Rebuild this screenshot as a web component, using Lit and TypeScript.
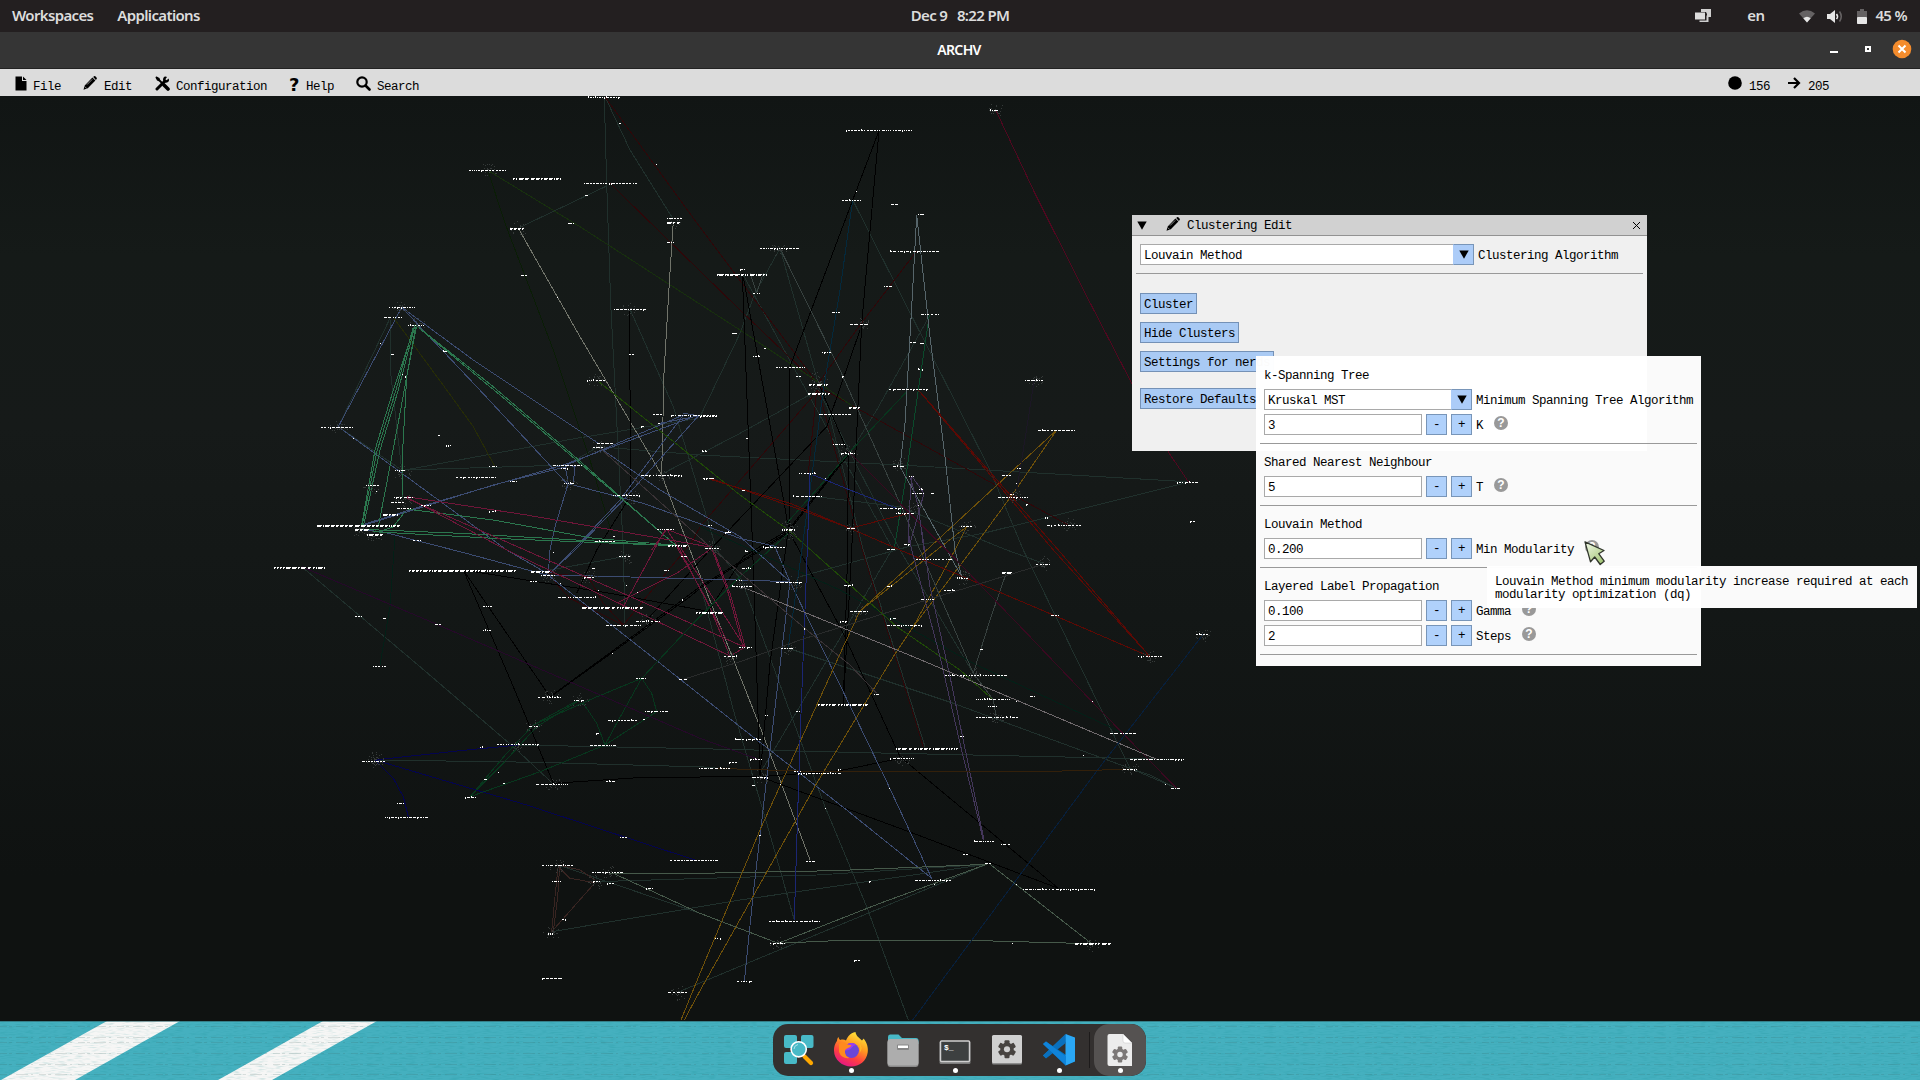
import { LitElement, html, svg, css } from "lit";
import { customElement, property } from "lit/decorators.js";

/* ---------- graph data ----------
   Points are "<sector><x>,<y>"; a sector is an origin on the screen and
   coordinates inside it are thirds of a pixel. */
const ORIGIN: Record<string, [number, number]> = {
  A: [260, 90],
  B: [700, 90],
  C: [260, 530],
  D: [700, 530],
};
const TOP = 96;

function pt(s: string): [number, number] {
  const o = ORIGIN[s[0]];
  const [x, y] = s.slice(1).split(",").map(Number);
  return [o[0] + x / 3, o[1] + y / 3 - TOP];
}

const TEAL = "#20302c";
const BLUE = "#3c4c72";
const GREEN = "#2b774e";
const CRIM = "#6f1639";
const BLACK = "#000000";
const DRED = "#2e0709";
const DGREEN = "#07371d";
const NAVY = "#04044e";
const GOLD = "#6e5009";
const RED = "#5c0904";
const SAGE = "#46594a";
const BEIGE = "#71746a";
const STEEL = "#56656a";
const PURP = "#43365a";

const EDGES: [string, string[]][] = [
  [TEAL, [
    "A1033,22 A1040,280 A1052,640 A1068,950 A1090,1380 C1095,290",
    "A1036,22 A1110,180 A1238,385", "A1040,288 A780,412",
    "A1110,658 A1240,950 A1370,1380 D125,150 D275,560 D375,830 D500,1130 D625,1470",
    "A390,685 A235,1010", "A390,685 A392,850 A425,1140", "A235,1010 A425,1140",
    "A435,1140 A950,1045 A1315,985", "A435,1140 A920,1125", "A1320,980 A1440,730 B165,610 B240,475",
    "A1210,1150 A1440,1030 B355,900", "A1015,1070 B0,1095 B600,1125 B1460,1175",
    "C125,110 C480,410 C760,650 C880,762", "C345,690 C830,697 C1365,712", "C775,645 D0,656 D500,668 D1410,688",
    "C875,1205 D120,1110 D860,1003", "C895,1005 D0,1150 D235,1240", "C1005,1055 D350,1035 D860,1003",
    "C1250,1388 D250,1255 D860,1003", "B458,330 B870,1140 B970,1380 D1290,715",
    "B240,475 B355,880", "B127,550 B400,1050 B580,1380", "B355,900 B600,1380 D820,430",
    "B690,675 B530,960 B455,1080", "B1460,1178 B850,1330 B625,1370 D300,140",
    "B330,1218 B600,1250 B920,1380 D1030,100", "D265,355 D760,520 D1290,715 D1430,775",
    "D1290,715 D1350,735 D1430,775", "C870,120 C1090,80", "D575,60 D290,545 D180,730",
    "B370,900 B490,1380 D675,650", "C1320,160 C1420,540 D200,880 D283,1170", "A1015,1070 A920,1125",
  ]],
  [DRED, [
    "A1036,22 B0,412 B345,870", "A1050,280 A1440,660 B340,870", "B650,483 B480,705 B355,880",
    "B355,900 B0,1310 C1300,30 C1090,285", "B355,890 B940,1215 B1105,1305", "B350,900 B325,1150",
    "B355,900 B487,1380 D670,650", "C1090,285 C1030,220 C985,140", "C870,140 C930,205 C1090,285", "C860,130 C985,140",
  ]],
  ["#0a1d06", ["A685,245 A735,400 A880,780 A990,1110 A1055,1330"]],
  ["#17300d", ["A690,245 A960,410 A1440,720 B345,870 B460,950"]],
  [BEIGE, ["A775,415 A960,740 A1205,1155", "A1240,395 A1228,580 A1212,850 A1205,1155", "A1205,1155 A1290,1380 D180,590 D330,990"]],
  [BLACK, [
    "A1108,658 A1110,900 A1113,1215", "C610,120 C1050,190 C1350,245", "C610,120 C870,500", "C610,120 C760,470 C880,760",
    "C870,500 C1280,200 D0,170 D265,5", "C872,500 C1290,200 D0,175 D267,8", "C880,760 C1150,742 D180,740",
    "B537,122 B458,330 B270,830 B268,1310", "B537,122 B485,700 B467,1100 B455,1380 D430,525",
    "B127,550 B158,1380 D180,735", "B130,560 B265,1310", "B445,1090 B443,1380 D430,525",
    "B480,720 B380,1010 B30,1380 C1160,270", "B265,1320 D210,400 D180,740", "B265,1320 D430,310 D600,680 D1075,1075",
    "D600,685 D420,722 D180,740", "D180,740 D640,910 D1075,1075", "B360,890 B445,1090",
    "B445,1090 B265,1320", "B447,1092 B268,1322", "A1113,1215 A1010,1380 C950,190", "B265,1320 D130,80 C1345,245",
  ]],
  [BLUE, [
    "A425,652 A235,1010", "A425,652 A640,810 A1015,1060", "A425,652 A650,890 A920,1180", "A235,1010 A740,1380 C870,135",
    "A305,1305 A480,1250 A910,1125 A1315,975", "A305,1308 A700,1185 A920,1130", "A920,1125 A945,1130 A940,1180",
    "A915,1125 A925,1180", "A920,1180 A1150,1240 A1440,1345 B230,1370", "A925,1180 A885,1310 A870,1380 C865,130",
    "A1315,978 A1090,1230 A945,1380 C870,130", "A1270,975 A1080,1230 A940,1380", "A1200,1000 A1315,978",
    "A1015,1070 A1200,1200 A1440,1340 D270,155", "C860,135 C1000,138 C1440,150 D270,155",
    "C870,140 C1150,360 C1440,590 D440,840 D695,1045", "C310,0 C365,5 C600,65 C860,135", "D270,155 D560,755 D695,1045",
    "D225,50 D270,155", "D270,155 D210,660 D160,1090 D133,1355", "C880,120 C1000,0", "A1270,975 A920,1125", "A1270,970 A1320,978",
  ]],
  ["#262c06", ["A400,682 A560,900 A640,1010 A705,1130"]],
  [GREEN, [
    "A465,706 A400,900 A345,1080 A305,1305", "A465,706 A415,900 A360,1080 A310,1310", "A460,712 A408,900 A352,1080 A307,1305",
    "A467,710 A420,970 A380,1180 A355,1310", "A470,706 A440,860 A428,1080 A428,1220",
    "A468,706 A700,890 A950,1105 A1245,1365", "A474,712 A720,915 A960,1120 A1250,1368",
    "A305,1318 A600,1330 A1245,1367", "A340,1325 A700,1345 A1245,1367", "A445,1258 A700,1290 A1000,1345 A1240,1365", "A435,1265 A400,1310 A360,1325",
  ]],
  [CRIM, [
    "A440,1220 A800,1275 A1200,1345 A1355,1372", "A440,1222 A740,1380 C1410,378", "A440,1225 A795,1380 D135,352",
    "C1090,230 C1215,0", "C1070,220 C1250,130 C1355,55", "C1250,50 C1340,210 C1410,378", "C1260,50 D135,352",
    "C1355,55 C1405,190 D130,352", "C1358,55 C1410,190 D136,352", "A1220,1318 A1260,1380 C1400,330", "A1220,1318 A1355,1370", "D90,378 D135,352", "A1220,1318 A1175,1380",
  ]],
  [DGREEN, [
    "C1145,445 C1000,505 C820,585", "C1145,445 C1070,580 C1035,645", "C1145,445 C1175,490 C1190,545 C1035,645",
    "C955,510 C820,585", "C955,513 C830,590 C720,710 C630,800", "C970,520 C1010,580 C1035,645", "C820,585 C740,670 C630,800",
    "C1035,645 C840,725 C630,800", "C1145,445 C1300,280 C1440,140 D265,10", "B620,905 B455,1080 B260,1300",
  ]],
  ["#0a4a2b", ["B688,675 B655,900 B615,1180 B582,1380 D585,50"]],
  ["#032017", ["C405,20 C390,230 C360,405", "B0,1310 D420,180 D820,400 D1270,610"]],
  ["#26082a", ["C125,110 C500,270 C870,430 D0,625 D180,690"]],
  [NAVY, ["C345,690 C600,662 C775,645", "C345,690 C800,825 C1305,990", "C345,690 C400,745 C430,800 C445,860"]],
  ["#382421", ["C895,1005 C885,1100 C875,1205", "C899,1005 C893,1100 C880,1205", "C895,1010 C930,1045 C1005,1058", "C895,1005 C960,1020 C1005,1050", "C1005,1058 C875,1205"]],
  [SAGE, ["C1060,1030 D0,1150 D235,1240", "C1050,1030 D0,1030 D400,1022 D860,1003", "D235,1240 D540,1120 D860,1003", "D235,1240 D430,1231 D800,1231 D1175,1241", "D870,1003 D1020,1120 D1175,1241"]],
  [GOLD, ["B1070,1020 B680,1380 D480,243", "B1070,1020 B940,1210 B815,1380 D640,290", "B800,1310 B765,1380 D640,290", "B800,1310 B710,1380 D480,243", "D480,243 D430,350 D180,900 D0,1330 C1263,1470", "D640,290 D580,380 D350,760 D0,1382 C1273,1470"]],
  ["#1f4a06", ["A1010,870 A1440,1215 B265,1320 D590,290 D780,420 D880,510"]],
  ["#04293c", ["B458,330 B420,600 B370,900 B330,1200 D300,100 D265,350"]],
  ["#37413f", ["B240,475 B420,840 B600,1240 B660,1380 D760,290 D820,430", "B150,550 B170,610", "B190,550 B170,610", "D920,125 D870,270 D820,430", "D820,430 D880,510 D890,570"]],
  [STEEL, ["B650,375 B635,650 B615,1000 B600,1130 B740,1380 D785,140", "B650,375 B690,740 B735,1100 B765,1380 D785,140"]],
  [RED, ["B655,900 B850,1130 B1060,1380 D1350,380", "B660,905 B860,1135 B1075,1380 D1350,380", "B30,1165 B290,1255 B450,1315", "B30,1168 B270,1240 B450,1315", "B450,1315 B625,1270", "B450,1315 B600,1380 D1060,255 D1350,380"]],
  ["#1b2674", ["B340,1155 B450,1200 B590,1255", "B330,1150 B322,1380 D300,630 D283,1170"]],
  ["#50071f", ["B888,62 B1000,300 B1140,580 B1295,880 B1408,1090 B1465,1175"]],
  ["#3a0820", ["B440,1080 B600,1240 B740,1380 D990,320 D1200,540 D1430,775"]],
  [PURP, ["B635,1158 B628,1260 B625,1360", "B635,1158 B672,1210 B650,1290 B630,1360", "B632,1165 B655,1250 B672,1380", "D625,0 D630,40 D720,380 D780,640 D850,930", "D665,0 D690,170 D750,440 D800,680 D852,930"]],
  ["#1c1725", ["B1003,870 B965,1110 B950,1200"]],
  ["#292b2b", ["D1030,103 D680,210 D300,330 C1440,395 C1270,448"]],
  ["#706a6d", ["D125,170 D640,380 D1370,688"]],
  ["#393235", ["A1015,1070 A1355,1375 D320,300 D450,405 D530,490"]],
  ["#071f3c", ["D1510,313 D1200,710 D638,1470"]],
  ["#33200a", ["C1365,715 D360,725 D1050,724 D1290,718"]],
];

/* Labels: "<point> <length>"; a trailing * makes the label two rows heavy. */
const LABELS = (
  "A985,22 95|A1078,101 10|A1188,223 3|A627,240 110|A758,264 148*|A972,280 160|A975,316 8|A750,416 46*|A1222,384 46|A1222,396 38*|A924,401 20|A1222,458 22|" +
  "A783,556 18|A1370,552 70|A891,621 3|A387,652 78|A372,682 54|A444,706 48|A1062,657 96|A1417,731 16|A1107,794 15|A549,784 12|A360,760 3|A393,794 9|A426,853 3|A435,862 3|" +
  "A981,871 54|A1180,973 28|A1232,975 62|A1290,977 80|A1195,1001 6|A1143,1010 9|A183,1012 96|A278,1044 4|A534,1036 6|A558,1067 15|A1010,1059 52|A1000,1072 30|A880,1125 86|A903,1135 20|" +
  "A687,1130 24|A405,1141 33|A588,1163 120|A750,1174 20|A912,1181 34|A1143,1155 122|A1330,1165 30|A1325,1084 12|A318,1186 38|A348,1205 6|A402,1221 58|A393,1238 42|A411,1255 42|A483,1247 30|A369,1272 45*|" +
  "A1059,1215 80|A686,1265 22|A171,1307 250*|A285,1317 42*|A320,1332 48*|A459,1352 26|A1190,1318 52|A1343,1306 12|A1395,1327 18|A1005,1355 62|A1225,1367 60*|A1059,1340 10|A1335,1376 42|" +
  "B870,61 24|B438,121 198|B426,331 60|B468,304 3|B573,342 20|B653,373 20|B180,475 118|B570,484 147|B51,552 150*|B120,538 16|B159,610 24|B552,589 26|B663,674 54|B396,667 24|B450,702 60|B98,731 16|B192,776 5|B159,799 20|" +
  "B366,788 26|B228,831 86|B630,757 18|B660,761 16|B288,860 14|B426,860 5|B654,838 17|B327,883 56*|B324,910 66*|B567,897 118|B975,870 54|B447,951 32*|B357,974 99|B0,978 50|B1014,1020 112|B138,1046 5|B400,1064 36|B423,1090 42|B5,1084 14|" +
  "B579,1130 36|B951,1136 12|B906,1157 26|B297,1151 54|B375,1165 3|B627,1158 18|B12,1165 30|B657,1198 16|B636,1209 36|B693,1211 9|B126,1202 10|B279,1218 87|B1431,1177 66|B895,1222 92|B930,1214 18|B948,1180 4|B978,1242 6|B655,1247 10|B540,1255 72|B588,1270 54|" +
  "B1035,1282 9|B783,1309 33|B1041,1306 102|B1470,1294 14|B441,1315 24|B246,1318 38*|B24,1306 12|B74,1327 18|B189,1372 68|B612,1363 18|B562,1378 27|" +
  "C42,112 153*|C447,120 320*|C813,123 60*|C843,136 42|C811,155 22|C880,68 7|C973,143 33|C1077,79 33|C1264,80 19|C1213,121 17|C996,115 9|C900,160 5|C1014,180 4|C1098,166 3|C1131,187 3|C1266,208 3|" +
  "C894,202 117|C966,232 183*|C1095,236 8|C1039,287 104|C1128,274 72|C1308,248 82*|C669,230 30|C670,301 28|C285,260 20|C369,265 8|C525,283 18|C1056,370 4|C339,408 39|C834,502 69|C942,510 30|C1127,445 30|C1258,448 31|C1393,379 38|" +
  "C807,590 26|C1155,544 69|C1044,570 90|C1150,567 5|C1008,610 8|C711,643 126|C990,645 84|C660,652 8|C306,694 72|C672,748 9|C713,727 3|C729,760 5|C828,763 99|C1038,754 27|C615,803 33|C411,821 20|C375,862 131|C1317,715 93|C1407,696 27|C1425,628 15|" +
  "C1080,922 23|C1230,991 147|C846,1006 93|C996,1026 96|C876,1054 26|C999,1054 20|C1041,1061 23|C1158,1075 20|C906,1169 11|C864,1210 18*|C1365,1225 18|C846,1346 63|C1224,1387 57|" +
  "D135,65 8|D126,116 26|D108,152 20|D96,169 60|D228,157 78|D432,166 29|D648,88 111|D1008,103 42|D906,126 33*|D771,146 35|D732,180 33|D561,169 16|D663,208 40|D450,243 57|D420,274 20|D570,266 20|D561,287 105|D1053,256 24|D312,295 4|D117,352 42|D243,355 39|D840,358 12|D1488,313 36|D1314,380 72|" +
  "D735,436 190|D522,492 14|D990,499 14|D828,508 102|D948,514 4|D1176,514 3|D864,529 26|D354,524 150*|D828,563 128|D195,556 8|D288,544 12|D780,620 11|D1230,610 81|D588,654 186*|D570,685 72|D105,628 82|D150,688 36|D1290,687 162|D1149,676 3|D1269,717 42|D1414,776 28|D1395,763 3|D282,725 24|D294,730 132|D413,718 9|D156,742 48|D156,767 8|D240,763 6|D568,775 3|D374,835 4|" +
  "D822,934 64|D903,943 27|D789,974 17|D855,1000 18|D177,916 6|D318,993 30|D645,1050 108|D508,1055 5|D702,1063 3|D948,1063 3|D969,1078 216|D207,1174 156|D210,1240 46|D1125,1241 108*|D936,1240 3|D462,1291 17|D111,1354 45"
).split("|");

const SPARKS = "A685,240 A775,415 A1240,395 A425,652 A470,700 A235,1012 A335,1190 A300,1320 A345,1335 A1018,1068 A1110,658 A1010,870 A425,1145 A430,1230 A925,1180 A1210,1160 A1115,1220 A1355,1372 B888,55 B235,475 B355,865 B355,890 B485,700 B445,1085 B600,1125 B265,1310 B265,1330 B940,1220 B1105,1305 B1005,868 B650,1250 B800,1310 B450,1315 C345,692 C350,685 C870,500 C880,762 C875,1208 C895,1008 C1050,1028 C1005,1055 C820,590 C960,510 C770,645 C870,135 C1095,80 C985,140 C1160,272 C1255,1388 D235,1238 D265,355 D125,170 D790,143 D480,243 D1350,380 D890,560 D820,435 D180,740 D605,685 D1290,715 D1510,313 D1175,1241 D1030,100 D280,160 D90,378".split(" ");

function mulberry(seed: number) {
  let a = seed;
  return () => {
    a = (a + 0x6d2b79f5) | 0;
    let t = Math.imul(a ^ (a >>> 15), 1 | a);
    t = (t + Math.imul(t ^ (t >>> 7), 61 | t)) ^ t;
    return ((t ^ (t >>> 14)) >>> 0) / 4294967296;
  };
}

function edgePath(list: string[]) {
  return list
    .map((e) => {
      const ps = e.split(" ").map(pt);
      return "M" + ps.map((p) => p[0].toFixed(1) + " " + p[1].toFixed(1)).join("L");
    })
    .join("");
}

function labelPath() {
  const rnd = mulberry(7);
  let d = "";
  for (const l of LABELS) {
    const [p, wRaw] = l.split(" ");
    const heavy = wRaw.endsWith("*");
    const w = Math.max(1, Math.round(parseInt(wRaw, 10) / 3));
    const q = pt(p);
    const x0 = Math.round(q[0]);
    const y0 = Math.floor(q[1]);
    let x = 0;
    while (x < w) {
      const run = Math.min(w - x, 1 + Math.floor(rnd() * (heavy ? 5 : 3.2)));
      d += `M${x0 + x} ${y0}h${run}v1h${-run}z`;
      if (heavy) {
        const r2 = Math.max(1, run - 1);
        d += `M${x0 + x} ${y0 + 1}h${r2}v1h${-r2}z`;
      } else if (rnd() < 0.16) {
        const dy = rnd() < 0.6 ? 1 : -1;
        d += `M${x0 + x} ${y0 + dy}h1v1h-1z`;
      }
      x += run + (rnd() < 0.12 ? 2 : 1);
    }
  }
  return d;
}

function sparkPath() {
  const rnd = mulberry(31);
  let d = "";
  for (const s of SPARKS) {
    const [cx, cy] = pt(s);
    for (let i = 0; i < 24; i++) {
      const a = rnd() * Math.PI * 2;
      const r = 1 + rnd() * 8;
      d += `M${Math.round(cx + Math.cos(a) * r)} ${Math.round(cy + Math.sin(a) * r * 0.8)}h1v1h-1z`;
    }
  }
  return d;
}

/* ---------- icons ---------- */
const pencil = html`<svg width="14" height="14" viewBox="0 0 14 14"><path d="M10.2.9 11 .2q.9-.5 1.6.3l.9.9q.7.8.1 1.7l-.7.8zM9.4 1.6l3 3-7.600 7.700L.5 13.700l1.200-4.300z" fill="#000"/><path d="M4 8.600 9.200 3.400M1.800 10.600l1.800 1.800" stroke="#aaa" stroke-width=".8"/></svg>`;
const fileIcon = html`<svg width="12" height="15" viewBox="0 0 12 15"><path d="M.5.500H7V5h4.500v9.500H.5zM8 .5 11.500 4H8z" fill="#000"/></svg>`;
const toolsIcon = html`<svg width="15" height="15" viewBox="0 0 15 15"><path d="M1.500 1.500 6.500 6.500M9 9l4 4" stroke="#000" stroke-width="1.800" stroke-linecap="round"/><path d="M9 9l4 4" stroke="#000" stroke-width="3.600" stroke-linecap="round"/><path d="M2 13 9.500 5.500" stroke="#000" stroke-width="3" stroke-linecap="round"/><path d="M.7 1.800 1.800.7 4.500 2l.5 2.200L3.900 5.200 2 4.500z"/><path d="M13.800 2.600 11.500 4.300 10.400 3.200 12 .9Q9.500 0 8.300 2q-.9 2 .4 3.700 1.800 1.600 4 .6 2-1.200 1.100-3.700z"/></svg>`;
const searchIcon = html`<svg width="15" height="15" viewBox="0 0 15 15"><circle cx="6" cy="6" r="4.700" fill="none" stroke="#000" stroke-width="2.200"/><path d="m9.500 9.500 4 4" stroke="#000" stroke-width="2.600" stroke-linecap="round"/></svg>`;
const triangle = html`<svg width="10" height="9" viewBox="0 0 10 9"><path d="M.3.500h9.400L5 8.800z" fill="#000"/></svg>`;

function gear(cx: number, cy: number, r: number, fill: string, hole: string) {
  const teeth = [0, 60, 120].map(
    (a) => svg`<rect x=${cx - r * 0.28} y=${cy - r} width=${r * 0.56} height=${r * 2} rx="1" fill=${fill} transform=${`rotate(${a} ${cx} ${cy})`}/>`
  );
  return svg`${teeth}<circle cx=${cx} cy=${cy} r=${r * 0.74} fill=${fill}/><circle cx=${cx} cy=${cy} r=${r * 0.34} fill=${hole}/>`;
}

const dockIcons = [
  { run: false, art: svg`<g fill="#48b9c7"><rect x="3" y="3" width="13" height="13" rx="2"/><rect x="20" y="3" width="12.500" height="13" rx="2"/><rect x="3" y="20" width="13" height="12" rx="2"/></g><path d="m23.500 24.500 6.500 6.500" stroke="#ffa800" stroke-width="4.200" stroke-linecap="round"/><circle cx="17.700" cy="17.300" r="7.600" fill="#48b9c7" stroke="#fff" stroke-width="1.600"/><path d="M13 17a5 5 0 0 1 4-4.500" stroke="#a9e3ea" fill="none"/>` },
  { run: true, art: svg`<defs><linearGradient id="fx" x1=".8" y1="0" x2=".3" y2="1"><stop offset="0" stop-color="#fff13f"/><stop offset=".4" stop-color="#ff9a1f"/><stop offset=".7" stop-color="#ff4040"/><stop offset="1" stop-color="#e31587"/></linearGradient></defs><path d="M22.500 0c.5 4 3.500 5.500 6.500 8.500 1-1 1.500-2 1.500-2C34 10.500 35.500 16 34.700 20.500 33.500 29 26.500 34.500 18 34.500S1 28 1 18.500C1 13 3 10.500 4 9c0-1.500.6-3 1.500-4 .3 1.500 1 2.500 1.800 3 2.200-.7 4.200-.4 5.700.6 1-3 4-7.600 9.500-8.600z" fill="url(#fx)"/><circle cx="18.500" cy="18.500" r="7.500" fill="#6b46d8"/><path d="M11 18.500a7.500 7.500 0 0 1 13-5q-3.500-.8-4.500 1.500-3 4-8.500 3.500z" fill="#9a3df0"/><path d="M6 12q3-3 7-.5 1.500 1.500 5.500 1.800-1 2.700-4.500 3.200-2.500 1-2 4 .5 4 4.500 5.500-8 1-10.500-6z" fill="#ff8a1e"/><path d="M25 9q4 5 1.500 12Q31 16 25 9z" fill="#ffc52e"/>` },
  { run: false, art: svg`<path d="M3 9V5q0-2.500 2-2.500h8.500L17 6h14q2.500 0 2.500 2.500V12H3z" fill="#48b9c7"/><rect x="2.500" y="8" width="31" height="27" rx="3" fill="#8a8a8a"/><rect x="2.500" y="7" width="31" height="26.500" rx="3" fill="#adadad"/><rect x="12" y="12.500" width="12" height="5.500" rx="1" fill="#868686"/><rect x="13" y="13.500" width="10" height="2.500" fill="#fff"/>` },
  { run: true, art: svg`<rect x="2.500" y="9" width="31" height="23" rx="1.500" fill="#7d7d7d"/><rect x="3.500" y="9" width="29" height="20.500" rx="1" fill="#3d4040" stroke="#cfcfcf" stroke-width="1.500"/><text x="7" y="18" font-family="Liberation Mono" font-weight="700" font-size="8" fill="#fff">$_</text>` },
  { run: false, art: svg`<rect x="3" y="4" width="30" height="28.500" rx="1.500" fill="#8d8d8d"/><rect x="3" y="3" width="30" height="28" rx="1.500" fill="#d0d0d0"/>${gear(18, 17.2, 9, "#474340", "#d0d0d0")}` },
  { run: true, art: svg`<path d="m2 12 3-2.500L34 29l-9.500 4.500z" fill="#0074c4"/><path d="m2 23.500 3 2.500L26 9 25.500 2z" fill="#1386d8"/><path d="M24.500 2 34 5.500v24L24.500 33.500z" fill="#2aa7f5"/><path d="M2 23.500 24.500 2l.2 9L5 26.500z" fill="#0a70bd"/><path d="m2 12 3-2.500 20 15-.5 8.500z" fill="#1083d9"/>` },
];

/* ---------- widgets ---------- */
const uiFont = css`
  font-family: "Liberation Mono", "DejaVu Sans Mono", monospace;
  font-size: 12.5px;
  letter-spacing: -0.5px;
  line-height: 13px;
  color: #000;
  white-space: nowrap;
`;

@customElement("ui-combo")
class UiCombo extends LitElement {
  @property() value = "";
  @property() label = "";
  static styles = css`
    :host { display: flex; height: 21px; align-items: center; ${uiFont} }
    .box { flex: 1; display: flex; height: 21px; box-sizing: border-box; border: 1px solid #a9a9a9; background: #fff; }
    .value { flex: 1; padding: 5px 0 0 3px; height: 13px; }
    .arrow { width: 21px; box-sizing: border-box; margin: -1px; background: #acccf8; border: 1px solid #7895b8; border-left-color: #acccf8; display: grid; place-items: center; }
    .label { padding-left: 4px; padding-top: 3px; width: var(--label-width, auto); }
  `;
  render() {
    return html`<div class="box"><span class="value">${this.value}</span><span class="arrow">${triangle}</span></div><span class="label">${this.label}</span>`;
  }
}

@customElement("ui-stepper")
class UiStepper extends LitElement {
  @property() value = "";
  @property() label = "";
  static styles = css`
    :host { display: flex; gap: 4px; height: 21px; ${uiFont} }
    .box { width: 158px; height: 21px; box-sizing: border-box; border: 1px solid #a9a9a9; background: #fff; padding: 5px 0 0 3px; }
    .step { width: 21px; height: 21px; box-sizing: border-box; background: #b0d1fb; border: 1px solid #7895b8; text-align: center; padding-top: 4px; }
    .label { padding-top: 6px; }
    .help { width: 14px; height: 14px; margin: 2px 0 0 7px; border-radius: 50%; background: #999; color: #fff; text-align: center; letter-spacing: 0; font: bold 12px/14px "Liberation Sans", sans-serif; }
  `;
  render() {
    return html`<span class="box">${this.value}</span><span class="step">-</span><span class="step">+</span><span class="label">${this.label}</span><span class="help">?</span>`;
  }
}

@customElement("graph-view")
class GraphView extends LitElement {
  static styles = css`
    :host { display: block; overflow: hidden; background: linear-gradient(#111514 0, #151a18 160px, #161a19 330px, #131716 520px, #0f1211 780px, #0f1211 100%); }
    svg { display: block; }
  `;
  render() {
    return html`<svg width="1920" height="925" viewBox="0 0 1920 925" shape-rendering="crispEdges" fill="none">
      ${EDGES.map(([c, l]) => svg`<path d=${edgePath(l)} stroke=${c} stroke-width="1"/>`)}
      <path d=${sparkPath()} fill="#353a39" />
      <path d=${labelPath()} fill="#fff" />
    </svg>`;
  }
}

@customElement("app-root")
class AppRoot extends LitElement {
  static styles = css`
    :host { display: grid; grid-template-rows: 32px 37px 27px 925px 59px; width: 1920px; height: 1080px; position: relative; overflow: hidden; background: #111; }
    .panel, .title { display: grid; grid-template-columns: 1fr auto 1fr; align-items: center; box-sizing: border-box; padding-bottom: 2px; font-family: "Noto Sans", "Open Sans", sans-serif; font-weight: 600; font-size: 15px; letter-spacing: -0.65px; color: #dcdcdc; white-space: nowrap; }
    .panel { background: #231f20; }
    .clock { white-space: pre; }
    .left { display: flex; gap: 24px; padding-left: 12px; }
    .right { display: flex; justify-content: flex-end; align-items: center; padding-right: 13px; }
    .right svg { position: relative; top: 1px; }
    .lang { margin: 0 35px 0 36px; }
    .wifi { margin-right: 12px; } .vol { margin-right: 14px; } .batt { margin-right: 8px; }
    .title { background: #353535; border-bottom: 1px solid #222; color: #fff; font-size: 14px; }
    .title .name { position: relative; left: -1px; }
    .title .right { padding-right: 8px; }
    .title .right svg { top: 0; }
    .min { width: 8px; height: 2px; background: #fff; margin: 6px 27px 0 0; }
    .max { width: 2px; height: 2px; border: 2px solid #fff; margin-right: 21px; }
    .menu { display: flex; background: #dcdcdc; ${uiFont} }
    .item { display: flex; align-items: flex-start; }
    .item span { padding-top: 12px; }
    .q { font: bold 18px/19px "DejaVu Sans", sans-serif; }
    .item .q { padding-top: 6px; }
    .item svg { margin-top: 7px; display: block; }
    .m1 { padding-left: 15px; width: 68px; gap: 6px; } .m2 { width: 72px; gap: 7px; } .m3 { width: 134px; gap: 6px; } .m4 { width: 67px; gap: 7px; } .m5 { gap: 6px; }
    .counts { display: flex; margin-left: auto; width: 192px; }
    .counts .item { gap: 7px; } .c1 { width: 60px; }
    .window { position: absolute; left: 1132px; top: 215px; width: 515px; height: 236px; background: #f0f0f0; display: flex; flex-direction: column; ${uiFont} }
    .head { height: 21px; flex: none; box-sizing: border-box; background: #d1d1d1; border-bottom: 1px solid #929292; display: flex; align-items: center; padding: 0 6px 0 5px; }
    .head .pen { margin: -3px 0 0 19px; display: block; }
    .head .pen svg { display: block; }
    .head .name { padding: 3px 0 0 7px; flex: 1; }
    .window ui-combo { flex: none; margin: 8px; --label-width: 161px; }
    .rule { height: 1px; flex: none; background: #999; margin: 0 4px; }
    .buttons { display: flex; flex-direction: column; align-items: flex-start; gap: 8px; padding: 19px 8px 0; }
    .button { height: 21px; box-sizing: border-box; padding: 5px 3px 0; background: #a9caf4; border: 1px solid #7491b6; }
    .restore { margin-top: 8px; }
    .popup { position: absolute; left: 1256px; top: 356px; width: 445px; height: 310px; background: rgba(255, 255, 255, 0.98); display: flex; flex-direction: column; ${uiFont} }
    .group { display: flex; flex: none; flex-direction: column; gap: 4px; padding: 0 8px 8px; }
    .group.first { padding-top: 1px; }
    .caption { height: 28px; box-sizing: border-box; padding-top: 13px; }
    .group ui-combo { width: 433px; --label-width: 221px; }
    .tooltip { position: absolute; left: 1487px; top: 566px; width: 430px; box-sizing: border-box; padding: 10px 8px 6px; height: 42px; background: rgba(255, 255, 255, 0.98); ${uiFont} }
    .cursor { position: absolute; left: 1584px; top: 541px; }
    .desk { position: relative; background: #45b0bf; }
    .desk > svg { position: absolute; left: 0; top: 0; }
    .dock { position: absolute; left: 773px; top: 3px; width: 373px; height: 52px; border-radius: 15px; background: #33302f; display: flex; overflow: hidden; }
    .app { width: 52px; height: 52px; display: grid; justify-items: center; grid-template-rows: 44px 5px; }
    .app svg { margin-top: 8px; }
    .dot { width: 5px; height: 5px; border-radius: 50%; background: #fff; }
    .sep { width: 1px; height: 36px; background: #1d1b1b; margin: 8px 4px 0 4px; }
    .active { background: #555251; border-radius: 15px; }
  `;

  render() {
    return html`
      <div class="panel">
        <div class="left"><span>Workspaces</span><span>Applications</span></div>
        <div class="clock">Dec 9   8:22 PM</div>
        <div class="right">
          <svg width="16" height="14" viewBox="0 0 16 14"><path d="M6 0h10v8h-4V5L11 3H6z" fill="#cfcfcf"/><path d="M0 3.500h10v7H0z" fill="#dcdcdc"/><path d="M4.500 11.500h7v-5h2V13h-9z" fill="#cfcfcf"/></svg>
          <span class="lang">en</span>
          <svg class="wifi" width="16" height="13" viewBox="0 0 16 13"><path d="M0 3.500Q8-3 16 3.500L8 12.500z" fill="#656263"/><path d="M4.300 8.300Q8 5.300 11.700 8.300L8 12.500z" fill="#e6e6e6"/></svg>
          <svg class="vol" width="16" height="13" viewBox="0 0 16 13"><path d="M0 4h3l5-4v13L3 9H0z" fill="#e6e6e6"/><path d="M9.500 4q2 2.500 0 5" stroke="#e6e6e6" stroke-width="1.600" fill="none"/><path d="M12.500 1.500q3.500 5 0 10" stroke="#656263" stroke-width="1.600" fill="none"/></svg>
          <svg class="batt" width="10" height="15" viewBox="0 0 10 15"><path d="M3 0h4v2h3v13H0V2h3z" fill="#656263"/><rect y="8" width="10" height="7" rx="1" fill="#e6e6e6"/></svg>
          <span>45 %</span>
        </div>
      </div>
      <div class="title">
        <span></span><span class="name">ARCHV</span>
        <div class="right">
          <span class="min"></span><span class="max"></span>
          <svg width="20" height="20" viewBox="0 0 20 20"><circle cx="10" cy="10" r="9.300" fill="#f48c2d"/><path d="m6.500 6.500 7 7m0-7-7 7" stroke="#fff" stroke-width="2"/></svg>
        </div>
      </div>
      <div class="menu">
        <div class="item m1">${fileIcon}<span>File</span></div>
        <div class="item m2">${pencil}<span>Edit</span></div>
        <div class="item m3">${toolsIcon}<span>Configuration</span></div>
        <div class="item m4"><span class="q">?</span><span>Help</span></div>
        <div class="item m5">${searchIcon}<span>Search</span></div>
        <div class="counts">
          <div class="item c1"><svg width="14" height="14" viewBox="0 0 14 14"><circle cx="7" cy="7" r="6.800"/></svg><span>156</span></div>
          <div class="item"><svg width="13" height="14" viewBox="0 0 13 14"><path d="M0 7h10.500M6 2l5 5-5 5" fill="none" stroke="#000" stroke-width="2.200"/></svg><span>205</span></div>
        </div>
      </div>
      <graph-view></graph-view>
      <div class="desk">
        <svg width="1920" height="59" viewBox="0 0 1920 59">
          <defs>
            <filter id="weave" x="0" y="0" width="100%" height="100%"><feTurbulence type="fractalNoise" baseFrequency="0.12 0.9" numOctaves="2" seed="4"/><feColorMatrix values="0 0 0 0 0  0 0 0 0 .2  0 0 0 0 .2  0 2.500 0 0 -1.150"/></filter>
          </defs>
          <path d="M107 0h73L75 59H1zM323 0h54L272 59h-54z" fill="#f6f6f5"/>
          <rect width="1920" height="59" filter="url(#weave)" opacity=".14"/>
          <path d="M0 5h1920M0 16h1920M0 21h1920M0 32h1920M0 43h1920M0 53h1920" stroke="#405c58" stroke-opacity=".16" stroke-dasharray="7 2 3 4 12 3 2 6" transform="translate(0 .5)"/>
          <path d="M0 .5h1920" stroke="#2d6067" stroke-opacity=".6"/>
        </svg>
        <div class="dock">
          ${dockIcons.map((d) => html`<div class="app"><svg width="36" height="36" viewBox="0 0 36 36">${d.art}</svg>${d.run ? html`<span class="dot"></span>` : ""}</div>`)}
          <span class="sep"></span>
          <div class="app active"><svg width="36" height="36" viewBox="0 0 36 36"><path d="M5.500 4q0-2 2-2H21l9 9v23H7.500q-2 0-2-2z" fill="#ececec"/><path d="M21 2v7q0 2 2 2h7z" fill="#fff" stroke="#c5c5c5" stroke-width=".5"/>${gear(18, 22.5, 8, "#7c7877", "#ececec")}</svg><span class="dot"></span></div>
        </div>
      </div>

      <div class="window">
        <div class="head">${triangle}<span class="pen">${pencil}</span><span class="name">Clustering Edit</span>
          <svg width="9" height="9" viewBox="0 0 9 9"><path d="m1 1 7 7m0-7-7 7" stroke="#000"/></svg>
        </div>
        <ui-combo value="Louvain Method" label="Clustering Algorithm"></ui-combo>
        <div class="rule"></div>
        <div class="buttons">
          <span class="button">Cluster</span>
          <span class="button">Hide Clusters</span>
          <span class="button">Settings for nerds</span>
          <span class="button restore">Restore Defaults</span>
        </div>
      </div>

      <div class="popup">
        <div class="group first">
          <div class="caption">k-Spanning Tree</div>
          <ui-combo value="Kruskal MST" label="Minimum Spanning Tree Algorithm"></ui-combo>
          <ui-stepper value="3" label="K"></ui-stepper>
        </div>
        <div class="rule"></div>
        <div class="group"><div class="caption">Shared Nearest Neighbour</div><ui-stepper value="5" label="T"></ui-stepper></div>
        <div class="rule"></div>
        <div class="group"><div class="caption">Louvain Method</div><ui-stepper value="0.200" label="Min Modularity"></ui-stepper></div>
        <div class="rule"></div>
        <div class="group"><div class="caption">Layered Label Propagation</div><ui-stepper value="0.100" label="Gamma"></ui-stepper><ui-stepper value="2" label="Steps"></ui-stepper></div>
        <div class="rule"></div>
      </div>

      <div class="tooltip">Louvain Method minimum modularity increase required at each<br>modularity optimization (dq)</div>
      <svg class="cursor" width="23" height="25" viewBox="0 0 23 25">
        <defs><linearGradient id="cur" x1="0" y1="0" x2=".7" y2="1"><stop offset="0" stop-color="#f4faea"/><stop offset="1" stop-color="#a6c77a"/></linearGradient></defs>
        <path d="M1 .8 20 9.500l-5.300 3.200 5.500 7.500-4 3.300-5.500-7.500-4.200 4.800z" fill="url(#cur)" stroke="#30352b" stroke-width="1.300" stroke-linejoin="round"/>
      </svg>
    `;
  }
}
